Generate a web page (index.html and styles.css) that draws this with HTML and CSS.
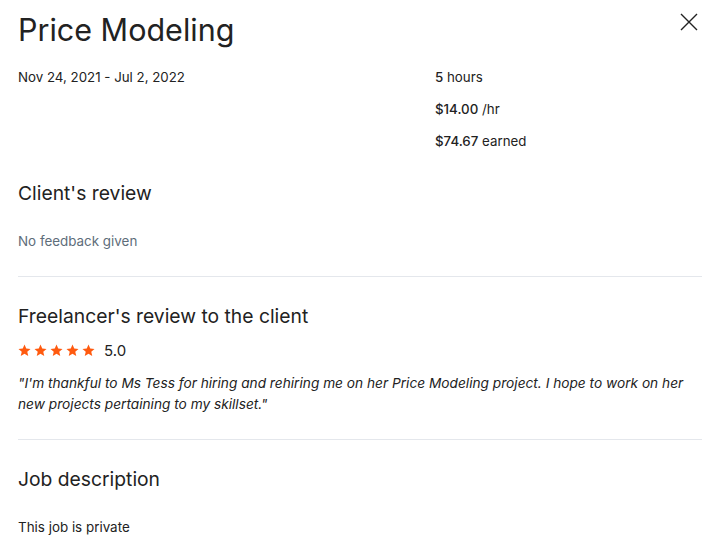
FILE: index.html
```html
<!DOCTYPE html>
<html lang="en">
<head>
    <meta charset="UTF-8">
    <title>Price Modeling</title>
    <link rel="stylesheet" href="styles.css">
</head>
<body>
    <div id="modal">
        <div class="header">
            <h1>Price Modeling</h1>
            <button class="close" aria-label="Close">
                <svg width="20" height="20" viewBox="0 0 20 20"><path d="M2 2 L18 18 M18 2 L2 18" stroke="#222" stroke-width="1.4" fill="none"/></svg>
            </button>
        </div>

        <div class="summary">
            <div class="dates">Nov 24, 2021 - Jul 2, 2022</div>
            <ul class="stats">
                <li><strong>5</strong> hours</li>
                <li><strong>$14.00</strong> /hr</li>
                <li><strong>$74.67</strong> earned</li>
            </ul>
        </div>

        <section class="block">
            <h2>Client's review</h2>
            <p class="muted">No feedback given</p>
        </section>

        <section class="block">
            <h2>Freelancer's review to the client</h2>
            <div class="rating">
                <span class="stars">
                    <svg width="13" height="13" viewBox="0 0 24 24"><path d="M12 1l3.2 7.3 7.9.7-6 5.3 1.8 7.8L12 18l-6.9 4.1 1.8-7.8-6-5.3 7.9-.7z"/></svg>
                    <svg width="13" height="13" viewBox="0 0 24 24"><path d="M12 1l3.2 7.3 7.9.7-6 5.3 1.8 7.8L12 18l-6.9 4.1 1.8-7.8-6-5.3 7.9-.7z"/></svg>
                    <svg width="13" height="13" viewBox="0 0 24 24"><path d="M12 1l3.2 7.3 7.9.7-6 5.3 1.8 7.8L12 18l-6.9 4.1 1.8-7.8-6-5.3 7.9-.7z"/></svg>
                    <svg width="13" height="13" viewBox="0 0 24 24"><path d="M12 1l3.2 7.3 7.9.7-6 5.3 1.8 7.8L12 18l-6.9 4.1 1.8-7.8-6-5.3 7.9-.7z"/></svg>
                    <svg width="13" height="13" viewBox="0 0 24 24"><path d="M12 1l3.2 7.3 7.9.7-6 5.3 1.8 7.8L12 18l-6.9 4.1 1.8-7.8-6-5.3 7.9-.7z"/></svg>
                </span>
                <span class="score">5.0</span>
            </div>
            <p class="quote">"I'm thankful to Ms Tess for hiring and rehiring me on her Price Modeling project. I hope to work on her new projects pertaining to my skillset."</p>
        </section>

        <section class="block last">
            <h2>Job description</h2>
            <p>This job is private</p>
        </section>
    </div>
</body>
</html>
```

FILE: styles.css
```css
body {
    font-family: Inter, "Liberation Sans", Arial, sans-serif;
    background: white;
    color: #222;
    margin: 0;
    padding: 0;
}

#modal {
    width: 684px;
    padding: 10px 23px 0 18px;
}

.header {
    display: flex;
    justify-content: space-between;
    align-items: flex-start;
}

h1 {
    font-size: 30.5px;
    font-weight: 400;
    margin: 0;
    line-height: 40px;
}

.close {
    background: none;
    border: none;
    padding: 0;
    margin: 2px 3px 0 0;
    cursor: pointer;
}

.summary {
    display: flex;
    margin-top: 17px;
    margin-bottom: 3px;
    font-size: 13.3px;
}

.dates {
    width: 417px;
    line-height: 20px;
}

.stats {
    list-style-type: none;
    padding: 0;
    margin: 0;
}

.stats li {
    line-height: 20px;
    margin-bottom: 12px;
}

.stats li:last-child {
    margin-bottom: 0;
}

.stats strong {
    font-weight: 500;
}

.block {
    border-bottom: 1px solid #e4e7ec;
    padding: 26px 0 24px;
}

.block.last {
    border-bottom: none;
}

h2 {
    font-size: 19.3px;
    font-weight: 400;
    margin: 0;
    line-height: 26px;
}

p {
    font-size: 13.4px;
    line-height: 21px;
    margin: 0;
}

.block p {
    margin-top: 25px;
}

.muted {
    color: #5e6d7a;
}

.rating {
    display: flex;
    align-items: center;
    margin-top: 11px;
    height: 20px;
}

.stars {
    display: flex;
    gap: 3px;
    fill: #ff5a0f;
}

.score {
    font-size: 15px;
    margin-left: 9px;
}

.block .quote {
    font-size: 13.7px;
    font-style: italic;
    margin-top: 13px;
}
```
